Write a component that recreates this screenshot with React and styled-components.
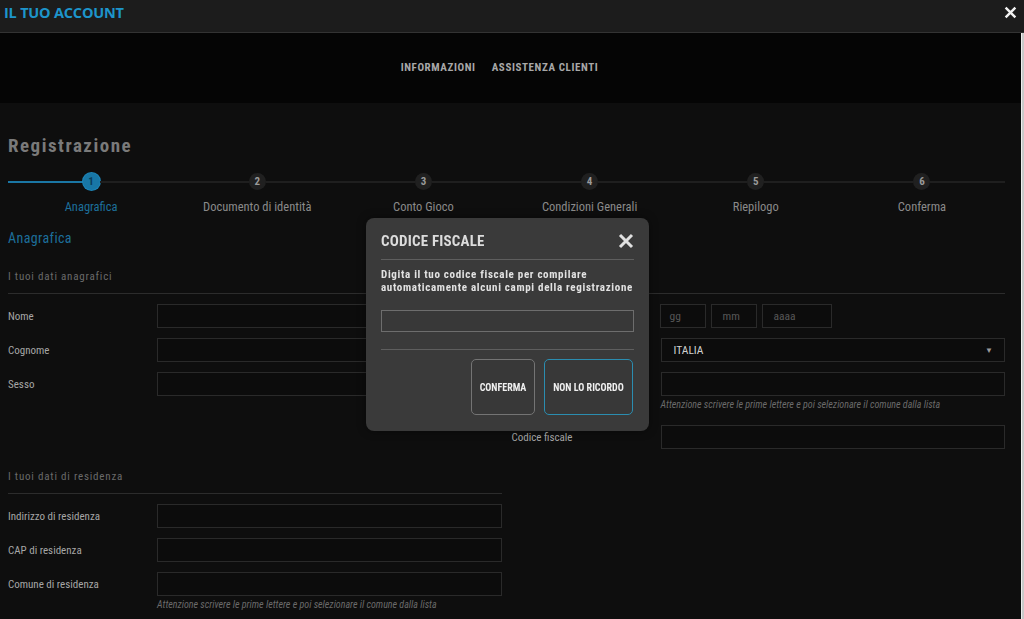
import React from "react";
import styled, { createGlobalStyle } from "styled-components";

const COND = `"Roboto Condensed", "Liberation Sans Narrow", Roboto, sans-serif`;

const Global = createGlobalStyle`
  html, body { margin: 0; padding: 0; background: #0e0e0e; overflow: hidden; }
  body { width: 1024px; height: 619px; font-family: ${COND}; }
  * { box-sizing: border-box; }
`;

const Page = styled.div`
  width: 1024px;
  height: 619px;
  display: flex;
  flex-direction: column;
  overflow: hidden;
`;

const TopBar = styled.header`
  height: 33px;
  flex: none;
  background: #1c1c1c;
  border-bottom: 1px solid #333;
  display: flex;
  align-items: center;
  justify-content: space-between;
  padding: 0 7px 7px 4px;
`;

const Brand = styled.h1`
  margin: 0;
  font-family: "Open Sans", sans-serif;
  font-weight: 700;
  font-size: 14.5px;
  color: #1d95cb;
  letter-spacing: -0.2px;
`;

const CloseBtn = styled.button`
  background: none;
  border: 0;
  padding: 0;
  display: flex;
  cursor: pointer;
`;

const Body = styled.div`
  flex: 1;
  display: flex;
  min-height: 0;
`;

const Scroller = styled.div`
  flex: 1;
  display: flex;
  flex-direction: column;
  min-width: 0;
`;

const ScrollStrip = styled.div`
  width: 3px;
  flex: none;
  background: #c9c9c9;
  border-left: 1px solid #eee;
`;

const Nav = styled.nav`
  height: 70px;
  flex: none;
  background: #050505;
  display: flex;
  align-items: center;
  justify-content: center;
  gap: 16px;
  padding: 0 22px 2px 0;
`;

const NavLink = styled.a`
  font-family: ${COND};
  font-weight: 700;
  font-size: 11px;
  letter-spacing: 0.6px;
  color: #a8a8a8;
  text-transform: uppercase;
`;

const Main = styled.main`
  flex: 1;
  background: #0e0e0e;
  padding: 31px 16px 0 8px;
  display: flex;
  flex-direction: column;
`;

const PageTitle = styled.h2`
  margin: 0;
  font-family: ${COND};
  font-weight: 700;
  font-size: 19px;
  line-height: 24px;
  letter-spacing: 1.5px;
  color: #7a7a7a;
`;

const Stepper = styled.ol`
  list-style: none;
  margin: 15px 0 0;
  padding: 0;
  display: grid;
  grid-template-columns: repeat(6, 1fr);
`;

const Step = styled.li`
  display: flex;
  flex-direction: column;
  align-items: center;
`;

const Track = styled.div`
  width: 100%;
  display: flex;
  align-items: center;
`;

const Seg = styled.span`
  flex: 1;
  height: 2px;
  background: ${(p) => (p.$on ? "#1a76a4" : "#1f1f1f")};
`;

const Dot = styled.span`
  width: 17px;
  height: 17px;
  border-radius: 50%;
  flex: none;
  display: flex;
  align-items: center;
  justify-content: center;
  font-family: ${COND};
  font-weight: 700;
  font-size: 11px;
  background: ${(p) => (p.$on ? "#1877a6" : "#202020")};
  color: ${(p) => (p.$on ? "#0b3e5a" : "#9a9a9a")};
  box-shadow: ${(p) => (p.$on ? "0 0 0 1px #1e86b8" : "none")};
`;

const StepLabel = styled.span`
  margin-top: 9px;
  font-family: ${COND};
  font-size: 12.5px;
  line-height: 16px;
  color: ${(p) => (p.$on ? "#1d6f9b" : "#8a8a8a")};
`;

const SectionTitle = styled.h3`
  margin: 14px 0 0;
  font-family: ${COND};
  font-weight: 400;
  font-size: 14px;
  line-height: 18px;
  letter-spacing: 0.4px;
  color: #1d6f9b;
`;

const GroupHead = styled.div`
  margin-top: ${(p) => p.$mt || 22}px;
  padding-bottom: 9px;
  border-bottom: 1px solid #2c2c2c;
  font-family: ${COND};
  font-size: 11px;
  line-height: 14px;
  letter-spacing: 0.8px;
  color: #6a6a6a;
`;

const TwoCol = styled.div`
  display: grid;
  grid-template-columns: 1fr 1fr;
  column-gap: 10px;
`;

const Fields = styled.div`
  display: flex;
  flex-direction: column;
  gap: 10px;
  padding-top: 10px;
`;

const Row = styled.div`
  display: grid;
  grid-template-columns: 149px 1fr;
  align-items: start;
`;

const Label = styled.label`
  height: 24px;
  display: flex;
  align-items: center;
  font-family: ${COND};
  font-size: 11px;
  color: #a6a6a6;
`;

const Control = styled.div`
  display: flex;
  flex-direction: column;
`;

const Input = styled.div`
  height: 24px;
  width: ${(p) => (p.$w ? p.$w + "px" : "100%")};
  border: 1px solid #2a2a2a;
  background: #0c0c0c;
  display: flex;
  align-items: center;
  padding: 0 ${(p) => p.$pl || 6}px;
  font-family: ${COND};
  font-size: 11.5px;
  color: ${(p) => (p.$ph ? "#575757" : "#d0d0d0")};
  justify-content: space-between;
`;

const DateRow = styled.div`
  display: flex;
  gap: 5px;
  margin-left: -1px;
`;

const Caret = styled.span`
  font-size: 8px;
  color: #9a9a9a;
  margin-right: -1px;
`;

const Hint = styled.span`
  margin: 3px 0 4px;
  font-family: ${COND};
  font-style: italic;
  font-size: 10px;
  line-height: 12px;
  color: #6a6a6a;
`;

const Modal = styled.div`
  position: fixed;
  left: 366px;
  top: 218px;
  width: 283px;
  height: 213px;
  background: #3a3a3a;
  border-radius: 8px;
  padding: 14px 15px 16px;
  display: flex;
  flex-direction: column;
  box-shadow: 0 0 10px rgba(0, 0, 0, 0.4);
`;

const ModalHead = styled.div`
  display: flex;
  justify-content: space-between;
  align-items: center;
  padding-bottom: 9px;
  border-bottom: 1px solid #5e5e5e;
`;

const ModalTitle = styled.h4`
  margin: 0;
  font-family: ${COND};
  font-weight: 700;
  font-size: 15px;
  line-height: 18px;
  color: #dcdcdc;
  letter-spacing: 0.2px;
`;

const ModalText = styled.p`
  margin: 8px 0 0;
  font-family: ${COND};
  font-weight: 700;
  font-size: 11px;
  line-height: 13px;
  letter-spacing: 0.68px;
  color: #e2e2e2;
`;

const ModalInput = styled.div`
  margin-top: 16px;
  height: 24px;
  border: 1px solid #6d6d6d;
  background: #383838;
`;

const ModalFoot = styled.div`
  margin-top: 17px;
  border-top: 1px solid #5e5e5e;
  padding-top: 9px;
  display: flex;
  justify-content: flex-end;
  gap: 9px;
  padding-right: 1px;
`;

const Btn = styled.button`
  height: 56px;
  width: ${(p) => p.$w}px;
  border-radius: 5px;
  background: #383838;
  border: 1px solid ${(p) => (p.$primary ? "#2b8db0" : "#747474")};
  color: #f0f0f0;
  font-family: ${COND};
  font-weight: 700;
  font-size: 10px;
  padding: 0;
`;

const XIcon = ({ size, color, stroke }) => (
  <svg width={size} height={size} viewBox="0 0 16 16">
    <path d="M2 2 L14 14 M14 2 L2 14" stroke={color} strokeWidth={stroke} strokeLinecap="butt" />
  </svg>
);

const steps = ["Anagrafica", "Documento di identità", "Conto Gioco", "Condizioni Generali", "Riepilogo", "Conferma"];

export default function App() {
  return (
    <Page>
      <Global />
      <TopBar>
        <Brand>IL TUO ACCOUNT</Brand>
        <CloseBtn aria-label="chiudi">
          <XIcon size={13} color="#f2f2f2" stroke={3} />
        </CloseBtn>
      </TopBar>
      <Body>
        <Scroller>
          <Nav>
            <NavLink>Informazioni</NavLink>
            <NavLink>Assistenza clienti</NavLink>
          </Nav>
          <Main>
            <PageTitle>Registrazione</PageTitle>
            <Stepper>
              {steps.map((s, i) => (
                <Step key={s}>
                  <Track>
                    <Seg $on={i === 0} />
                    <Dot $on={i === 0}>{i + 1}</Dot>
                    <Seg />
                  </Track>
                  <StepLabel $on={i === 0}>{s}</StepLabel>
                </Step>
              ))}
            </Stepper>
            <SectionTitle>Anagrafica</SectionTitle>
            <GroupHead $mt={23}>I tuoi dati anagrafici</GroupHead>
            <TwoCol>
              <Fields>
                <Row><Label>Nome</Label><Input /></Row>
                <Row><Label>Cognome</Label><Input /></Row>
                <Row><Label>Sesso</Label><Input /></Row>
              </Fields>
              <Fields>
                <Row>
                  <Label>Data di nascita</Label>
                  <DateRow>
                    <Input $w={46} $ph $pl={9}>gg</Input>
                    <Input $w={46} $ph $pl={11}>mm</Input>
                    <Input $w={70} $ph $pl={11}>aaaa</Input>
                  </DateRow>
                </Row>
                <Row>
                  <Label>Nazione di nascita</Label>
                  <Input $pl={12}>ITALIA<Caret>▼</Caret></Input>
                </Row>
                <Row>
                  <Label>Comune di nascita</Label>
                  <Control>
                    <Input />
                    <Hint>Attenzione scrivere le prime lettere e poi selezionare il comune dalla lista</Hint>
                  </Control>
                </Row>
                <Row><Label>Codice fiscale</Label><Input /></Row>
              </Fields>
            </TwoCol>
            <TwoCol>
              <div>
                <GroupHead $mt={21}>I tuoi dati di residenza</GroupHead>
                <Fields>
                  <Row><Label>Indirizzo di residenza</Label><Input /></Row>
                  <Row><Label>CAP di residenza</Label><Input /></Row>
                  <Row>
                    <Label>Comune di residenza</Label>
                    <Control>
                      <Input />
                      <Hint>Attenzione scrivere le prime lettere e poi selezionare il comune dalla lista</Hint>
                    </Control>
                  </Row>
                </Fields>
              </div>
            </TwoCol>
          </Main>
        </Scroller>
        <ScrollStrip />
      </Body>
      <Modal role="dialog">
        <ModalHead>
          <ModalTitle>CODICE FISCALE</ModalTitle>
          <XIcon size={16} color="#e0e0e0" stroke={3} />
        </ModalHead>
        <ModalText>
          Digita il tuo codice fiscale per compilare
          <br />
          automaticamente alcuni campi della registrazione
        </ModalText>
        <ModalInput />
        <ModalFoot>
          <Btn $w={64}>CONFERMA</Btn>
          <Btn $w={89} $primary>NON LO RICORDO</Btn>
        </ModalFoot>
      </Modal>
    </Page>
  );
}
